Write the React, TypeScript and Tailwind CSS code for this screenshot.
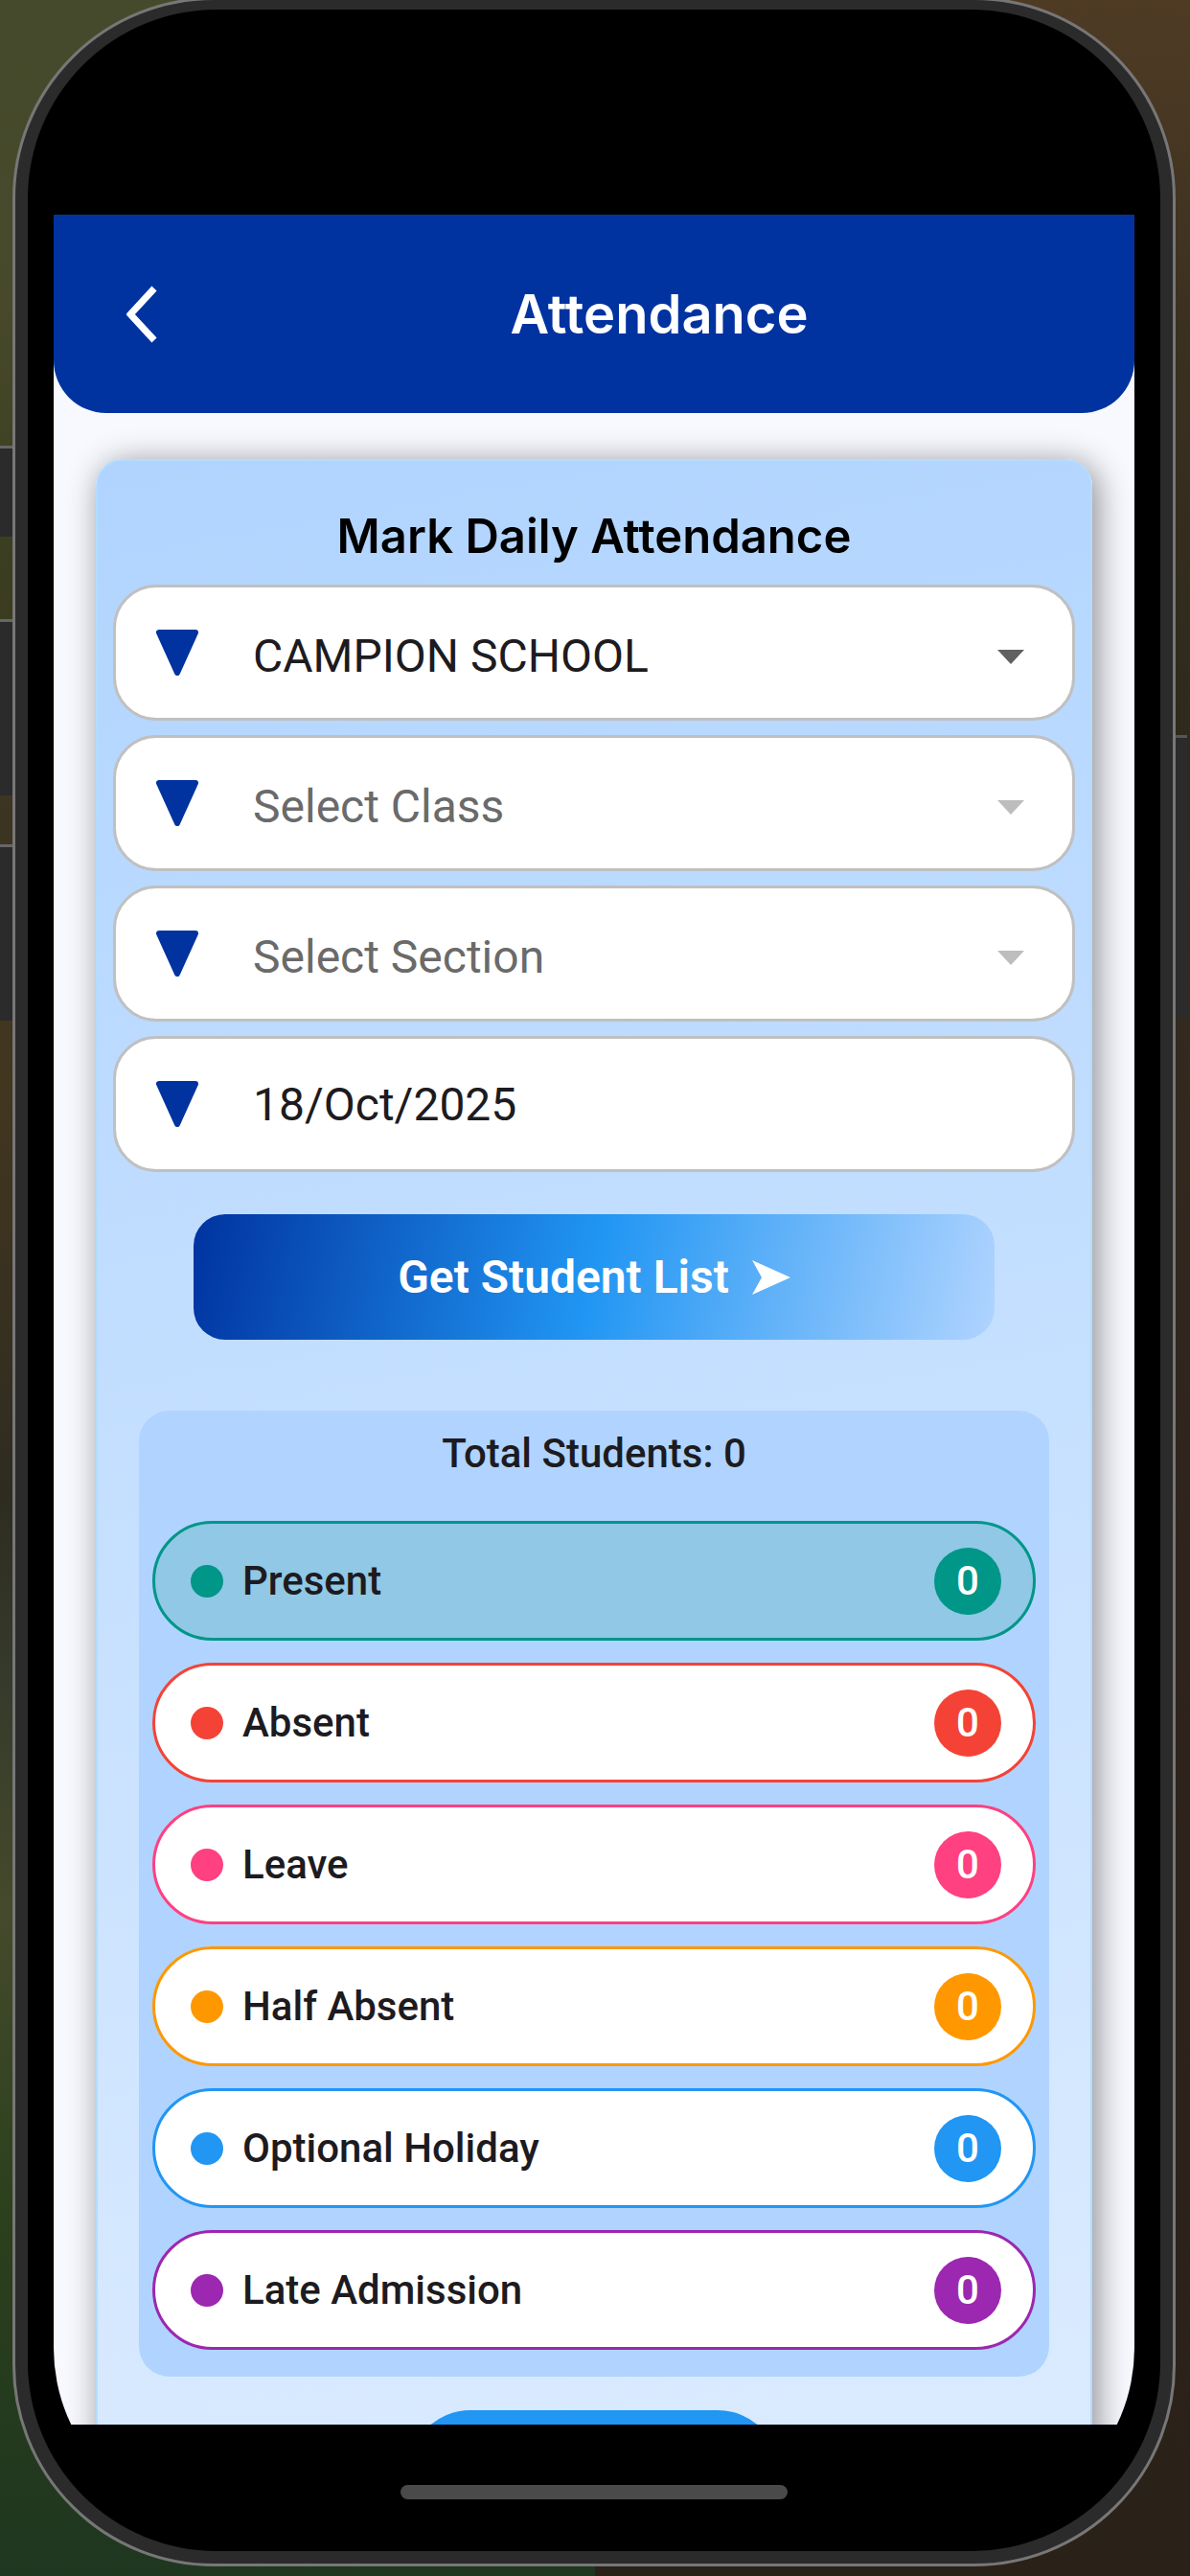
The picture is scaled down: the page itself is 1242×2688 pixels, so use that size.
import React, { useState } from 'react';

interface StatusItem {
  id: string;
  label: string;
  count: number;
  border: string;
  fill: string;
}

const STATUSES: StatusItem[] = [
  { id: 'present', label: 'Present', count: 0, border: 'border-[#009688]', fill: 'bg-[#009688]' },
  { id: 'absent', label: 'Absent', count: 0, border: 'border-[#f44336]', fill: 'bg-[#f44336]' },
  { id: 'leave', label: 'Leave', count: 0, border: 'border-[#ff4081]', fill: 'bg-[#ff4081]' },
  { id: 'half', label: 'Half Absent', count: 0, border: 'border-[#ff9800]', fill: 'bg-[#ff9800]' },
  { id: 'holiday', label: 'Optional Holiday', count: 0, border: 'border-[#2196f3]', fill: 'bg-[#2196f3]' },
  { id: 'late', label: 'Late Admission', count: 0, border: 'border-[#9c27b0]', fill: 'bg-[#9c27b0]' },
];

// blurred wallpaper behind the phone, one vertical gradient per side
const wallpaperClass =
  'bg-[linear-gradient(#454a2c,#47492a_12%,#3b3d20_22%,#3c3422_32%,#43361f_42%,#2e2c20_58%,#353a2b_65%,#454a2b_74%,#2b401c_86%,#1f3620),linear-gradient(#4f3b24,#3a3020_13%,#2e2a1c_28%,#33291f_40%,#2f241c_60%,#2a2119)] bg-[size:50%_100%] bg-[position:left,right] bg-no-repeat';

const fieldClass =
  'flex h-[142px] items-center rounded-[45px] border-3 border-[#c0c0c0] bg-white pl-[41px] pr-[50px]';

const FieldIcon = () => (
  <svg viewBox="0 0 46 50" className="h-[50px] w-[46px] shrink-0" aria-hidden="true">
    <path d="M4 4H42L23 46Z" fill="#0033a0" stroke="#0033a0" strokeWidth="6" strokeLinejoin="round" />
  </svg>
);

interface SelectFieldProps {
  label: string;
  options: string[];
  disabled?: boolean;
}

const SelectField: React.FC<SelectFieldProps> = ({ label, options, disabled }) => (
  <div className={fieldClass}>
    <FieldIcon />
    <select
      aria-label={label}
      disabled={disabled}
      className={`ml-14 h-full min-w-0 flex-1 appearance-none bg-transparent pt-2 text-[48px] opacity-100 outline-none ${
        disabled ? 'text-[#6a6a6a]' : 'text-[#1d1b20]'
      }`}
    >
      {options.map(option => (
        <option key={option}>{option}</option>
      ))}
    </select>
    <svg viewBox="0 0 28 15" className="mt-2 h-[15px] w-7 shrink-0" aria-hidden="true">
      <path d="M0 0H28L14 15Z" fill={disabled ? '#bdbdbd' : '#616161'} />
    </svg>
  </div>
);

const App: React.FC = () => {
  const [selected, setSelected] = useState('present');
  const [date, setDate] = useState('18/Oct/2025');

  return (
    <div className={`h-screen overflow-hidden pb-[7px] font-['Roboto',sans-serif] text-[#1d1b20] ${wallpaperClass}`}>
      <div className="relative -mt-[3px] ml-[13px] mr-[15px] flex h-full flex-col rounded-[210px] border-3 border-[#777777] bg-[#2b2b2b] p-[13px] pt-[10px]">
        {/* hardware buttons */}
        <div className="absolute -left-4 top-[465px] h-[95px] w-[13px] border-t-3 border-[#666666] bg-[#2b2b2b]" />
        <div className="absolute -left-4 top-[646px] h-[184px] w-[13px] border-t-3 border-[#666666] bg-[#2b2b2b]" />
        <div className="absolute -left-4 top-[881px] h-[184px] w-[13px] border-t-3 border-[#666666] bg-[#2b2b2b]" />
        <div className="absolute -right-[15px] top-[767px] h-[295px] w-3 border-t-3 border-[#555555] bg-[#2b2b2b]" />

        <div className="min-h-0 flex-1 rounded-[197px] bg-black p-[27px]">
          <div className="flex h-full flex-col overflow-hidden rounded-[185px]">
            <div className="h-[187px] shrink-0 bg-black" />

            <div className="flex min-h-0 flex-1 flex-col overflow-hidden bg-[#f8f9ff]">
              <header className="flex h-[207px] shrink-0 items-center gap-1 rounded-b-[55px] bg-[#0033a0] pl-[52px] text-white">
                <button type="button" aria-label="Back" className="flex h-20 w-20 items-center justify-center">
                  <svg viewBox="0 0 32 60" className="h-[60px] w-8" fill="none" aria-hidden="true">
                    <path d="M29 3L4 30L29 57" stroke="currentColor" strokeWidth="7" />
                  </svg>
                </button>
                <h1 className="flex-1 text-center font-['Inter',sans-serif] text-[56px] font-semibold leading-[70px]">
                  Attendance
                </h1>
              </header>

              <main className="min-h-0 flex-1 overflow-y-auto px-11 pt-12 [scrollbar-width:none]">
                <form
                  onSubmit={e => e.preventDefault()}
                  className="flex flex-col gap-[15px] rounded-[28px] border-2 border-[#b3dcff] bg-linear-170 from-[#b0d4ff] to-[#deedff] px-4 pb-16 pt-11 shadow-[5px_5px_34px_rgba(0,0,0,0.45)]"
                >
                  <h2 className="text-center font-['Inter',sans-serif] text-[49px] font-semibold leading-[70px] text-black">
                    Mark Daily Attendance
                  </h2>

                  <SelectField label="School" options={['CAMPION SCHOOL']} />
                  <SelectField label="Class" options={['Select Class']} disabled />
                  <SelectField label="Section" options={['Select Section']} disabled />
                  <div className={fieldClass}>
                    <FieldIcon />
                    <input
                      type="text"
                      aria-label="Date"
                      value={date}
                      onChange={e => setDate(e.target.value)}
                      className="ml-14 h-full min-w-0 flex-1 bg-transparent text-[48px] outline-none"
                    />
                  </div>

                  <button
                    type="submit"
                    className="mx-21 mt-[29px] flex h-[131px] items-center justify-center gap-6 rounded-[33px] bg-linear-[102deg,#0033a0,#2196f3_50%,#b0d4ff] text-[48px] font-semibold text-white"
                  >
                    Get Student List
                    <svg viewBox="0 0 40 36" className="h-9 w-10" fill="currentColor" aria-hidden="true">
                      <path d="M0 0L40 18L0 36L10 18Z" />
                    </svg>
                  </button>

                  <section className="mx-[27px] mt-[59px] rounded-[32px] bg-[#b0d4ff] px-[14px] pb-7 pt-[15px] font-medium">
                    <p className="text-center text-[42px] leading-[60px]">Total Students: 0</p>
                    <div className="mt-10 flex flex-col gap-[23px]">
                      {STATUSES.map(status => (
                        <button
                          key={status.id}
                          type="button"
                          aria-pressed={selected === status.id}
                          onClick={() => setSelected(status.id)}
                          className={`flex h-[125px] items-center rounded-full border-3 pl-[37px] pr-[33px] text-[42px] ${status.border} ${
                            selected === status.id ? 'bg-[#90c8e6]' : 'bg-white'
                          }`}
                        >
                          <span className={`h-[34px] w-[34px] rounded-full ${status.fill}`} />
                          <span className="ml-5 flex-1 text-left">{status.label}</span>
                          <span className={`flex h-[70px] w-[70px] items-center justify-center rounded-full text-white ${status.fill}`}>
                            {status.count}
                          </span>
                        </button>
                      ))}
                    </div>
                  </section>

                  <button
                    type="button"
                    aria-label="Submit"
                    className="mt-5 h-[130px] w-[388px] self-center rounded-full bg-[#2196f3]"
                  />
                </form>
              </main>
            </div>

            {/* home indicator */}
            <div className="flex h-[105px] shrink-0 items-center justify-center bg-black pt-[35px]">
              <div className="h-[15px] w-[404px] rounded-full bg-[#4a4a4a]" />
            </div>
          </div>
        </div>
      </div>
    </div>
  );
};

export default App;
